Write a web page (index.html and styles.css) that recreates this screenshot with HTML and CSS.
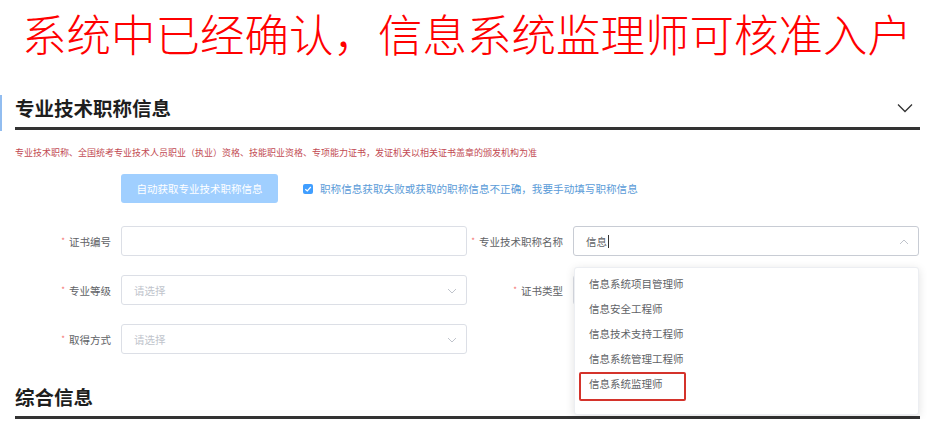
FILE: index.html
```html
<!DOCTYPE html>
<html lang="zh-CN">
<head>
<meta charset="utf-8">
<title>专业技术职称信息</title>
<link rel="stylesheet" href="styles.css">
</head>
<body>
<div class="banner">系统中已经确认，信息系统监理师可核准入户</div>
<div class="section">
  <div class="sec-head">
    <span class="sec-title">专业技术职称信息</span>
    <svg class="sec-chev" width="16" height="10" viewBox="0 0 16 10"><path d="M1 1.5 L8 8.5 L15 1.5" fill="none" stroke="#333" stroke-width="1.3"/></svg>
  </div>
  <div class="note">专业技术职称、全国统考专业技术人员职业（执业）资格、技能职业资格、专项能力证书，发证机关以相关证书盖章的颁发机构为准</div>
  <div class="action-row">
    <div class="btn">自动获取专业技术职称信息</div>
    <label class="check">
      <span class="check-box"><svg width="8" height="8" viewBox="0 0 8 8"><path d="M1.3 4.2 L3.3 6 L6.8 2" fill="none" stroke="#fff" stroke-width="1.2"/></svg></span>
      <span class="check-text">职称信息获取失败或获取的职称信息不正确，我要手动填写职称信息</span>
    </label>
  </div>
  <div class="form">
    <div class="field">
      <div class="label"><span class="req">*</span>证书编号</div>
      <div class="input"></div>
    </div>
    <div class="field">
      <div class="label"><span class="req">*</span>专业技术职称名称</div>
      <div class="input-wrap">
        <div class="input focus"><span class="value">信息</span><span class="caret"></span>
          <svg class="chev" width="10" height="6" viewBox="0 0 10 6"><path d="M1 5 L5 1 L9 5" fill="none" stroke="#c0c4cc" stroke-width="1"/></svg>
        </div>
        <div class="dropdown">
          <div class="item">信息系统项目管理师</div>
          <div class="item">信息安全工程师</div>
          <div class="item">信息技术支持工程师</div>
          <div class="item">信息系统管理工程师</div>
          <div class="item marked">信息系统监理师<span class="mark"></span></div>
        </div>
      </div>
    </div>
    <div class="field">
      <div class="label"><span class="req">*</span>专业等级</div>
      <div class="input"><span class="ph">请选择</span>
        <svg class="chev" width="10" height="6" viewBox="0 0 10 6"><path d="M1 1 L5 5 L9 1" fill="none" stroke="#c0c4cc" stroke-width="1"/></svg>
      </div>
    </div>
    <div class="field">
      <div class="label"><span class="req">*</span>证书类型</div>
      <div class="input"></div>
    </div>
    <div class="field">
      <div class="label"><span class="req">*</span>取得方式</div>
      <div class="input"><span class="ph">请选择</span>
        <svg class="chev" width="10" height="6" viewBox="0 0 10 6"><path d="M1 1 L5 5 L9 1" fill="none" stroke="#c0c4cc" stroke-width="1"/></svg>
      </div>
    </div>
    <div class="field"></div>
  </div>
  <div class="sec-head second">
    <span class="sec-title">综合信息</span>
  </div>
</div>
</body>
</html>
```

FILE: styles.css
```css
html, body {
  margin: 0;
  padding: 0;
  background: #fff;
  font-family: "Noto Sans CJK SC", "Liberation Sans", sans-serif;
  overflow: hidden;
}
.banner {
  height: 66px;
  line-height: 66px;
  padding-left: 22px;
  font-size: 44.5px;
  font-weight: 300;
  color: #ff0000;
  white-space: nowrap;
}
.section {
  position: relative;
  padding: 0 32px 0 15px;
}
.section::before {
  content: "";
  position: absolute;
  left: 0;
  top: 7px;
  width: 2px;
  height: 36px;
  background: #92bdf0;
}
.sec-head {
  margin-top: 22px;
  height: 39px;
  border-bottom: 3px solid #333;
  display: flex;
  align-items: center;
  justify-content: space-between;
}
.sec-head.second {
  margin-top: 24px;
  height: 38px;
}
.sec-title {
  font-size: 19.5px;
  font-weight: 700;
  color: #1e1e1e;
  line-height: 1;
}
.sec-chev {
  margin-right: 7px;
}
.note {
  margin-top: 16px;
  height: 14px;
  line-height: 14px;
  font-size: 9px;
  color: #c24a52;
  white-space: nowrap;
}
.action-row {
  margin-top: 14px;
  display: flex;
  align-items: center;
  padding-left: 106px;
}
.btn {
  width: 157px;
  height: 29px;
  line-height: 29px;
  text-align: center;
  background: #a0cfff;
  color: #fff;
  font-size: 10.5px;
  border-radius: 3px;
}
.check {
  display: flex;
  align-items: center;
  margin-left: 25px;
}
.check-box {
  width: 10px;
  height: 10px;
  background: #409eff;
  border-radius: 2px;
  display: flex;
  align-items: center;
  justify-content: center;
}
.check-text {
  margin-left: 7px;
  font-size: 10.6px;
  color: #5a9bd8;
}
.form {
  margin-top: 23px;
  display: grid;
  grid-template-columns: 452px 452px;
  row-gap: 19px;
}
.field {
  display: flex;
  align-items: center;
  height: 30px;
}
.label {
  width: 96px;
  padding-right: 10px;
  text-align: right;
  font-size: 10.5px;
  color: #606266;
  white-space: nowrap;
}
.req {
  color: #f56c6c;
  font-size: 8px;
  margin-right: 4px;
  vertical-align: 2px;
}
.input-wrap {
  position: relative;
  width: 346px;
  height: 30px;
}
.input {
  position: relative;
  box-sizing: border-box;
  width: 346px;
  height: 30px;
  border: 1px solid #dcdfe6;
  border-radius: 3px;
  display: flex;
  align-items: center;
  padding-left: 12px;
  font-size: 10.5px;
}
.input.focus {
  border-color: #c8ccd4;
}
.value {
  color: #606266;
}
.caret {
  width: 1px;
  height: 13px;
  background: #333;
  margin-left: 1px;
}
.ph {
  color: #c0c4cc;
}
.chev {
  position: absolute;
  right: 9px;
  top: 12px;
}
.dropdown {
  position: absolute;
  left: 1px;
  top: 41px;
  width: 345px;
  height: 148px;
  box-sizing: border-box;
  padding-top: 3px;
  background: #fff;
  border: 1px solid #eceef2;
  border-radius: 3px;
  box-shadow: 0 2px 10px rgba(0, 0, 0, 0.12);
  z-index: 5;
}
.item {
  position: relative;
  height: 25px;
  line-height: 25px;
  padding-left: 14px;
  font-size: 10.5px;
  color: #606266;
}
.mark {
  position: absolute;
  left: 4px;
  top: 1px;
  width: 107px;
  height: 29px;
  box-sizing: border-box;
  border: 2px solid #d4332b;
  border-radius: 2px;
}
```
